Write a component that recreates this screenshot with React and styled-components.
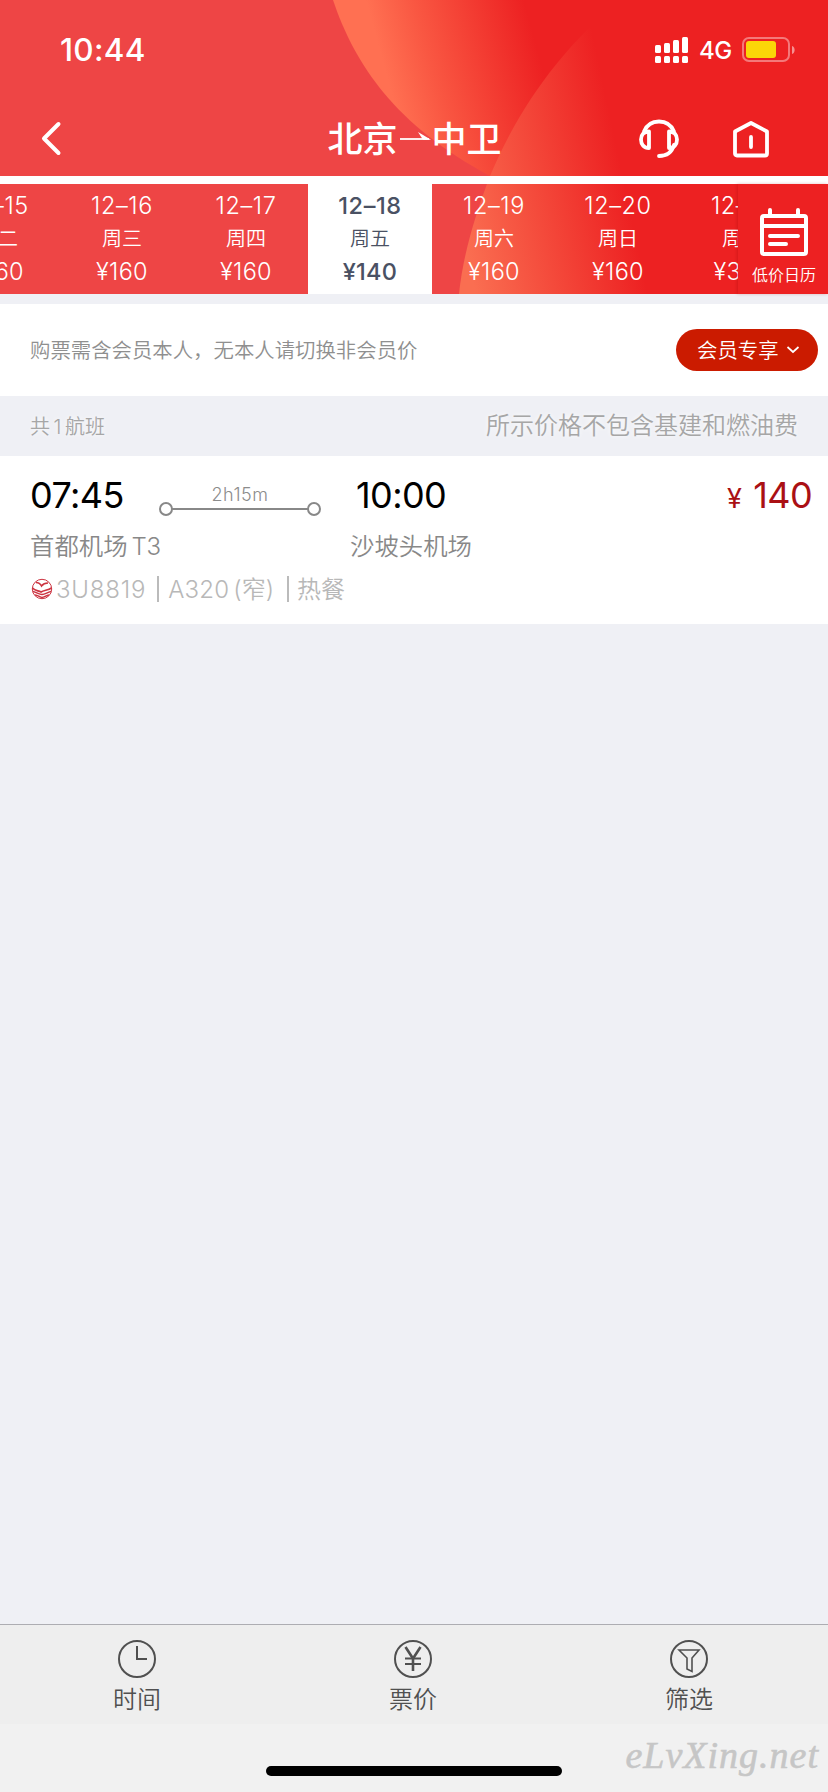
import React from 'react';
import styled, { createGlobalStyle } from 'styled-components';

const GlobalStyle = createGlobalStyle`
  * {
    box-sizing: border-box;
  }

  body {
    margin: 0;
    background-color: #eff0f5;
    font-family: Inter, 'Noto Sans CJK SC', sans-serif;
  }
`;

const Page = styled.div`
  display: flex;
  flex-direction: column;
  width: 828px;
  height: 1792px;
  overflow: hidden;
  background-color: #eff0f5;
`;

const Hero = styled.header`
  position: relative;
  height: 294px;
  background-color: #ee4545;
`;

const HeroArt = styled.svg`
  position: absolute;
  top: 0;
  left: 0;
`;

const HeroContent = styled.div`
  position: relative;
`;

const StatusBar = styled.div`
  display: flex;
  align-items: center;
  height: 100px;
  padding: 0 32px 0 60px;
  color: #ffffff;
`;

const Clock = styled.div`
  flex: 1;
  padding-bottom: 2px;
  font-size: 31.5px;
  font-weight: 550;
  letter-spacing: 0.3px;
`;

const Network = styled.div`
  width: 43px;
  padding-left: 10px;
  margin-right: 10px;
  font-size: 24px;
  font-weight: 450;
  letter-spacing: -0.5px;
`;

const NavBar = styled.div`
  display: flex;
  align-items: center;
  height: 76px;
  padding: 2px 59px 0 40px;
`;

const NavSide = styled.div`
  flex: 1;
  display: flex;
  align-items: center;
  justify-content: ${props => props.$end ? 'flex-end' : 'flex-start'};
  gap: 54px;
`;

const Title = styled.h1`
  display: flex;
  align-items: center;
  margin: 0;
  padding-left: 20px;
  color: #ffffff;
  font-size: 35px;
  font-weight: 500;
  line-height: 40px;
`;

const DateStrip = styled.div`
  display: flex;
  height: 118px;
  border-top: 8px solid #ffffff;
`;

const DateList = styled.div`
  display: flex;
  width: 738px;
  overflow: hidden;
`;

const DateCell = styled.div`
  flex: 0 0 124px;
  margin-left: ${props => props.$first ? '-64px' : '0'};
  padding-top: 6px;
  text-align: center;
  color: ${props => props.$active ? '#4a5163' : '#ffffff'};
  background-color: ${props => props.$active ? '#ffffff' : 'transparent'};
  font-weight: ${props => props.$active ? 500 : 350};
`;

const DateText = styled.div`
  height: 32px;
  line-height: 32px;
  font-size: 23.5px;
  letter-spacing: 0.6px;
`;

const Fare = styled(DateText)`
  letter-spacing: 0.3px;
`;

const Weekday = styled.div`
  height: 34px;
  line-height: 34px;
  font-size: 20px;
  font-weight: 350;
`;

const CalendarButton = styled.div`
  display: flex;
  flex-direction: column;
  align-items: center;
  width: 90px;
  padding: 22px 0 0 2px;
  color: #ffffff;
  background-color: #ed2122;
  box-shadow: -1px 0 3px rgba(150, 0, 0, 0.25);
  font-size: 16px;
  font-weight: 350;
  line-height: 38px;
`;

const Notice = styled.div`
  display: flex;
  align-items: center;
  justify-content: space-between;
  height: 92px;
  margin-top: 10px;
  padding: 0 10px 0 30px;
  background-color: #ffffff;
  color: #8f8f8f;
  font-size: 20.4px;
  font-weight: 350;

  > span {
    padding-bottom: 2px;
  }
`;

const MemberButton = styled.div`
  display: flex;
  align-items: center;
  gap: 7px;
  width: 142px;
  height: 42px;
  padding: 0 0 2px 21px;
  border-radius: 21px;
  background-color: #cb1b00;
  color: #ffffff;
`;

const Summary = styled.div`
  display: flex;
  align-items: center;
  justify-content: space-between;
  height: 60px;
  padding: 0 30px 2px;
  color: #a6a6a6;
  font-weight: 350;
  text-shadow: 0 0 5px #ffffff;
`;

const FlightCount = styled.span`
  font-size: 20px;
  word-spacing: -2px;
`;

const TaxHint = styled.span`
  padding-bottom: 3px;
  font-size: 24px;
`;

const FlightCard = styled.section`
  height: 168px;
  padding: 16px 16px 0 30px;
  background-color: #ffffff;
`;

const TimesRow = styled.div`
  display: flex;
  height: 48px;
`;

const Time = styled.div`
  width: ${props => props.$width};
  color: #000000;
  font-size: 36px;
  line-height: 46px;
  letter-spacing: -0.6px;
`;

const Duration = styled.div`
  width: 198px;
  margin-right: 17px;
  padding-top: 13px;
  text-align: center;
  color: #8c8c8c;
  font-size: 18px;
  font-weight: 300;
  line-height: 20px;
  letter-spacing: 0.5px;

  svg {
    display: block;
    margin-top: -3px;
  }
`;

const Price = styled.div`
  flex: 1;
  text-align: right;
  color: #aa1014;
  font-size: 36px;
  line-height: 46px;
  letter-spacing: -0.6px;

  small {
    margin-right: 12px;
    font-size: 27px;
  }
`;

const AirportRow = styled.div`
  display: flex;
  height: 54px;
  color: #888888;
  font-size: 24.4px;
  font-weight: 350;
  line-height: 53px;
`;

const Airport = styled.div`
  width: ${props => props.$width || 'auto'};

  span {
    margin-left: 4px;
    font-size: 24px;
    letter-spacing: -0.4px;
  }
`;

const PlaneRow = styled.div`
  display: flex;
  align-items: center;
  height: 30px;
  padding-left: 1px;
  color: #b8b8b8;
  font-size: 24px;
  font-weight: 350;
`;

const PlaneInfo = styled.span`
  margin-left: ${props => props.$left};
  padding-top: 2px;
  letter-spacing: ${props => props.$spacing || '0'};
  line-height: 28px;
`;

const Divider = styled.i`
  width: 2px;
  height: 26px;
  margin-left: ${props => props.$left};
  background-color: #bbbbbb;
`;

const Blank = styled.main`
  flex: 1;
`;

const TabBar = styled.nav`
  display: flex;
  height: 100px;
  border-top: 1px solid #adadb2;
  background-color: #eeeeee;
`;

const Tab = styled.div`
  flex: 1;
  display: flex;
  flex-direction: column;
  align-items: center;
  padding: 15px 2px 0 0;
  color: #505050;
  font-size: 24px;
  font-weight: 350;
  line-height: 38px;

  svg {
    margin-bottom: 3px;
  }
`;

const BottomArea = styled.footer`
  position: relative;
  display: flex;
  justify-content: center;
  height: 68px;
  padding-top: 42px;
  background-color: #f1f1f1;
`;

const HomeIndicator = styled.div`
  width: 296px;
  height: 10px;
  border-radius: 5px;
  background-color: #000000;
`;

const Watermark = styled.div`
  position: absolute;
  top: 8px;
  right: 9px;
  color: #c6c6c6;
  font-family: 'Liberation Serif', serif;
  font-size: 38px;
  font-style: italic;
  line-height: 46px;
  letter-spacing: 1px;
  -webkit-text-stroke: 0.6px #c6c6c6;
`;

const dates = [
  { date: '12–15', day: '周二', price: '¥160' },
  { date: '12–16', day: '周三', price: '¥160' },
  { date: '12–17', day: '周四', price: '¥160' },
  { date: '12–18', day: '周五', price: '¥140', active: true },
  { date: '12–19', day: '周六', price: '¥160' },
  { date: '12–20', day: '周日', price: '¥160' },
  { date: '12–21', day: '周一', price: '¥300' },
];

const HeroBackground = () => (
  <HeroArt width="828" height="294" viewBox="0 0 828 294">
    <defs>
      <linearGradient id="leftGlow" gradientUnits="userSpaceOnUse" x1="385" y1="70" x2="532" y2="30">
        <stop offset="0" stopColor="#ff7052" />
        <stop offset="0.3" stopColor="#f95742" />
        <stop offset="1" stopColor="#ed2122" />
      </linearGradient>
      <linearGradient id="rightGlow" gradientUnits="userSpaceOnUse" x1="465" y1="245" x2="630" y2="210">
        <stop offset="0" stopColor="#fa6e51" />
        <stop offset="1" stopColor="#ed2122" />
      </linearGradient>
    </defs>
    <path d="M333 0C355 65 395 125 490 176L828 176V0Z" fill="url(#leftGlow)" />
    <path d="M620 0C562 48 520 105 490 176C475 215 463 255 459 294H828V0Z" fill="url(#rightGlow)" />
  </HeroArt>
);

const SignalIcon = () => (
  <svg width="34" height="28" viewBox="0 0 34 28" fill="#ffffff">
    <rect x="0" y="9" width="6" height="8" rx="1.5" />
    <rect x="9" y="7" width="6" height="10" rx="1.5" />
    <rect x="18" y="4" width="6" height="13" rx="1.5" />
    <rect x="27" y="1" width="6" height="16" rx="1.5" />
    <rect x="0" y="20" width="6" height="7" rx="1.5" />
    <rect x="9" y="20" width="6" height="7" rx="1.5" />
    <rect x="18" y="20" width="6" height="7" rx="1.5" />
    <rect x="27" y="20" width="6" height="7" rx="1.5" />
  </svg>
);

const BatteryIcon = () => (
  <svg width="54" height="26" viewBox="0 0 54 26">
    <rect x="1" y="1" width="46" height="23" rx="6" fill="none" stroke="#ffffff" strokeOpacity="0.4" strokeWidth="2" />
    <rect x="4" y="4" width="30" height="17" rx="3" fill="#fbd608" />
    <path d="M50 9C53.500 10 53.500 16 50 17Z" fill="#ffffff" fillOpacity="0.5" />
  </svg>
);

const BackIcon = () => (
  <svg width="24" height="38" viewBox="0 0 24 38" fill="none" stroke="#ffffff" strokeWidth="4" strokeLinecap="round" strokeLinejoin="round">
    <path d="M18.500 4L4 18.500L18.500 33" />
  </svg>
);

const ArrowIcon = () => (
  <svg width="34" height="36" viewBox="0 0 34 36">
    <path d="M2 18H31" stroke="#ffffff" strokeWidth="1.8" />
    <path d="M20 11L33 18.800H25Z" fill="#ffffff" />
  </svg>
);

const HeadsetIcon = () => (
  <svg width="40" height="40" viewBox="0 0 40 40" fill="none" stroke="#ffffff" strokeWidth="3.8" strokeLinecap="round" strokeLinejoin="round">
    <path d="M5 12.500C8 5.500 13.500 2.500 20 2.500C26.500 2.500 32 5.500 35 12.500" />
    <path d="M10 12.500V29C5 29 2 25.500 2 20.500C2 15.500 5 12.500 10 12.500Z" />
    <path d="M30 12.500V29C35 29 38 25.500 38 20.500C38 15.500 35 12.500 30 12.500Z" />
    <path d="M35 26C33 33 28 37 20 37" />
  </svg>
);

const HomeIcon = () => (
  <svg width="36" height="38" viewBox="0 0 36 38" fill="none" stroke="#ffffff" strokeWidth="3.8" strokeLinecap="round" strokeLinejoin="round">
    <path d="M2 11.500L18 3L34 11.500V33.500Q34 35.500 32 35.500H4Q2 35.500 2 33.500Z" />
    <path d="M18 17V27" />
  </svg>
);

const CalendarIcon = () => (
  <svg width="48" height="50" viewBox="0 0 48 50" fill="none" stroke="#ffffff" strokeWidth="4" strokeLinecap="round" strokeLinejoin="round">
    <rect x="2" y="10" width="44" height="38" rx="2" />
    <path d="M2 20H46M10 4V10M38 4V10M10 30H38M10 38H26" />
  </svg>
);

const ChevronIcon = () => (
  <svg width="14" height="10" viewBox="0 0 14 10" fill="none" stroke="#ffffff" strokeWidth="1.7">
    <path d="M1.500 3L7 8L12.500 3" />
  </svg>
);

const RouteLine = () => (
  <svg width="198" height="14" viewBox="0 0 198 14" fill="none" stroke="#888888" strokeWidth="2">
    <circle cx="25" cy="7" r="6" />
    <circle cx="173" cy="7" r="6" />
    <path d="M31 7H167" />
  </svg>
);

const AirlineLogo = () => (
  <svg width="22" height="22" viewBox="0 0 22 22" fill="none" stroke="#cc3340" strokeWidth="1.6">
    <circle cx="11" cy="11" r="9.700" strokeWidth="1" />
    <path d="M5 4.500C8 4.500 9.500 6 10.500 8C12 6 13.500 5 17 5" />
    <path d="M1.500 10C4 13 7 12.500 10 14C13 12 17 12.500 20.500 10" strokeWidth="1.700" />
    <path d="M2 13.500C6 14.500 8 16.500 11 16.500C14 16.500 16 14.500 20 13.500M4 17C7 17 9 19.500 11 19.500C13 19.500 15 17.500 18 17" strokeWidth="1.500" />
  </svg>
);

const ClockIcon = () => (
  <svg width="38" height="38" viewBox="0 0 38 38" fill="none" stroke="#505050" strokeWidth="2">
    <circle cx="19" cy="19" r="18" />
    <path d="M19 6V19H29" />
  </svg>
);

const YenIcon = () => (
  <svg width="38" height="38" viewBox="0 0 38 38" fill="none" stroke="#505050" strokeWidth="2">
    <circle cx="19" cy="19" r="18" />
    <path d="M11.500 7L19 18.500L26.500 7M19 18V31" strokeWidth="2.600" />
    <path d="M11 18.500H27M11 24H27" />
  </svg>
);

const FilterIcon = () => (
  <svg width="38" height="38" viewBox="0 0 38 38" fill="none" stroke="#505050" strokeWidth="2">
    <circle cx="19" cy="19" r="18" />
    <path d="M9 10H29L22 18V31.500L17 29V18Z" strokeWidth="1.600" />
  </svg>
);

const App = () => {
  return (
    <Page>
      <GlobalStyle />
      <Hero>
        <HeroBackground />
        <HeroContent>
          <StatusBar>
            <Clock>10:44</Clock>
            <SignalIcon />
            <Network>4G</Network>
            <BatteryIcon />
          </StatusBar>
          <NavBar>
            <NavSide><BackIcon /></NavSide>
            <Title>北京<ArrowIcon />中卫</Title>
            <NavSide $end>
              <HeadsetIcon />
              <HomeIcon />
            </NavSide>
          </NavBar>
          <DateStrip>
            <DateList>
              {dates.map((item, index) => (
                <DateCell key={item.date} $first={index === 0} $active={item.active}>
                  <DateText>{item.date}</DateText>
                  <Weekday>{item.day}</Weekday>
                  <Fare>{item.price}</Fare>
                </DateCell>
              ))}
            </DateList>
            <CalendarButton>
              <CalendarIcon />
              低价日历
            </CalendarButton>
          </DateStrip>
        </HeroContent>
      </Hero>
      <Notice>
        <span>购票需含会员本人，无本人请切换非会员价</span>
        <MemberButton>会员专享<ChevronIcon /></MemberButton>
      </Notice>
      <Summary>
        <FlightCount>共 1 航班</FlightCount>
        <TaxHint>所示价格不包含基建和燃油费</TaxHint>
      </Summary>
      <FlightCard>
        <TimesRow>
          <Time $width="111px">07:45</Time>
          <Duration>
            2h15m
            <RouteLine />
          </Duration>
          <Time $width="120px">10:00</Time>
          <Price><small>¥</small>140</Price>
        </TimesRow>
        <AirportRow>
          <Airport $width="320px">首都机场<span>T3</span></Airport>
          <Airport>沙坡头机场</Airport>
        </AirportRow>
        <PlaneRow>
          <AirlineLogo />
          <PlaneInfo $left="3px" $spacing="0.8px">3U8819</PlaneInfo>
          <Divider $left="11px" />
          <PlaneInfo $left="9px" $spacing="0.2px">A320</PlaneInfo>
          <PlaneInfo $left="4px">(窄)</PlaneInfo>
          <Divider $left="13px" />
          <PlaneInfo $left="8px">热餐</PlaneInfo>
        </PlaneRow>
      </FlightCard>
      <Blank />
      <TabBar>
        <Tab><ClockIcon />时间</Tab>
        <Tab><YenIcon />票价</Tab>
        <Tab><FilterIcon />筛选</Tab>
      </TabBar>
      <BottomArea>
        <HomeIndicator />
        <Watermark>eLvXing.net</Watermark>
      </BottomArea>
    </Page>
  );
};

export default App;
